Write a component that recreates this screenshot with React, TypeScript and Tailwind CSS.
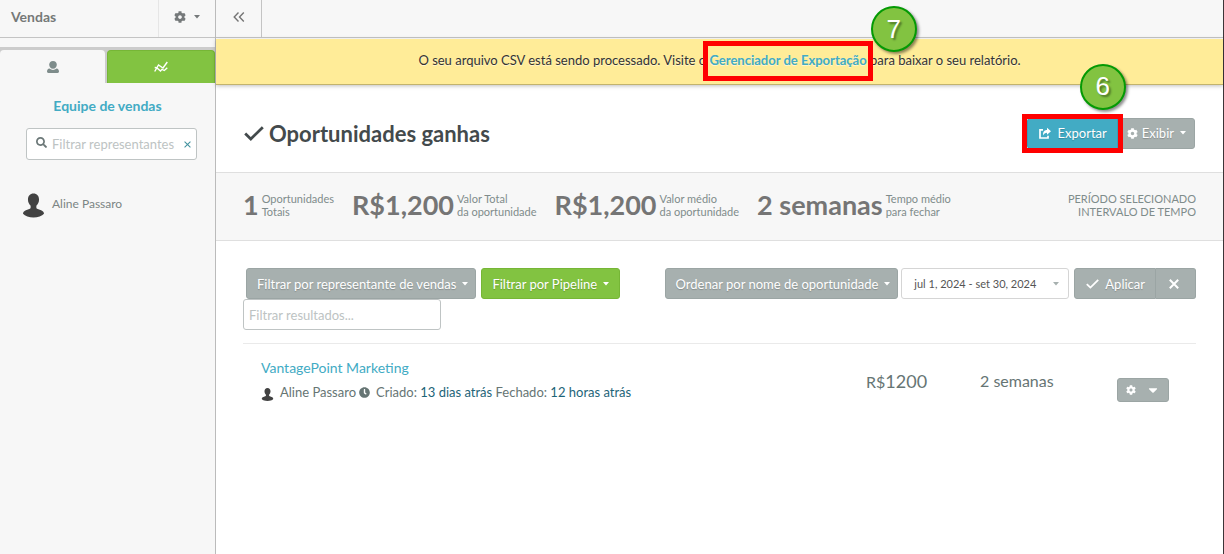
import type { ReactNode } from "react";
import { FaCog, FaSearch, FaCaretDown, FaClock } from "react-icons/fa";

const stats = [
  { value: "1", lines: ["Oportunidades", "Totais"] },
  { value: "R$1,200", lines: ["Valor Total", "da oportunidade"] },
  { value: "R$1,200", lines: ["Valor médio", "da oportunidade"] },
  { value: "2 semanas", lines: ["Tempo médio", "para fechar"] },
];

function Caret() {
  return (
    <svg className="h-1 w-1.5 shrink-0" viewBox="0 0 6 4" fill="currentColor" aria-hidden="true">
      <path d="M0 0h6L3 3.5z" />
    </svg>
  );
}

function Check({ className }: { className: string }) {
  return (
    <svg className={className} viewBox="0 0 20 15" fill="none" stroke="currentColor" strokeWidth="2.8" aria-hidden="true">
      <path d="M1.2 7.6l5.6 5.4L18.8 1.2" />
    </svg>
  );
}

function Cross({ className, strokeWidth = 2 }: { className: string; strokeWidth?: number }) {
  return (
    <svg className={className} viewBox="0 0 10 10" fill="none" stroke="currentColor" strokeWidth={strokeWidth} aria-hidden="true">
      <path d="M.8.8l8.400 8.400M9.200.8L.8 9.200" />
    </svg>
  );
}

function Avatar({ className }: { className: string }) {
  return (
    <svg className={className} viewBox="0 0 22 25" fill="#424242" aria-hidden="true">
      <path d="M11 0c3.600 0 5.800 2.600 5.800 6.200 0 2.700-1.200 5.200-2.800 6.600v1.700c0 .8.500 1.300 1.400 1.600l3.600 1.300c2 .8 3 2 3 3.800C20 23.800 15.500 25 11 25S2 23.800 0 21.200c0-1.800 1-3 3-3.800l3.600-1.300c.9-.3 1.400-.8 1.400-1.600v-1.700C6.400 11.400 5.200 8.900 5.200 6.200 5.200 2.600 7.400 0 11 0z" />
    </svg>
  );
}

function Badge({ children, className }: { children: ReactNode; className: string }) {
  return (
    <span
      className={`absolute z-10 flex size-[46px] items-center justify-center rounded-full border-2 border-[#049a04] bg-[#82c341] font-['Liberation_Sans'] text-[26px] font-normal text-white shadow-[2px_2px_3px_rgba(0,0,0,0.45)] [text-shadow:2px_2px_2px_rgba(0,0,0,0.4)] ${className}`}
    >
      {children}
    </span>
  );
}

const button =
  "flex h-[31px] items-center whitespace-nowrap rounded-[3px] border border-[#9ba5a4] bg-[#a7b0af] text-[13px] leading-5 text-white [text-shadow:0_1px_1px_rgba(0,0,0,0.2)]";

function Sidebar() {
  return (
    <aside className="w-[216px] shrink-0 border-r border-[#bbbbbb] bg-[#f7f7f7]">
      <div className="flex h-[38px] border-b border-[#c4c4c4]">
        <h2 className="flex-1 pl-[11px] text-sm leading-[34px] font-bold text-[#757978]">Vendas</h2>
        <button
          aria-label="Configurações"
          className="flex w-[57px] items-center justify-center gap-2 border-l border-[#e6e6e6] pb-1 text-[#75797a]"
        >
          <FaCog className="size-3" />
          <Caret />
        </button>
      </div>
      <div className="mt-[9px] flex h-9 gap-0.5 bg-[#cccccc] pt-[3px]">
        <button
          aria-label="Representantes"
          className="flex w-[105px] items-center justify-center rounded-t bg-[#f7f7f7] text-[#7e8c8b]"
        >
          <svg className="h-3 w-3" viewBox="0 0 12 12" fill="currentColor">
            <path d="M6 0c2.300 0 3.800 1.600 3.800 3.800S8.300 7.800 6 7.800 2.200 6 2.200 3.800 3.700 0 6 0z" />
            <path d="M2.500 7.600C3.500 8.500 4.700 9 6 9s2.500-.5 3.500-1.400c1.700.3 2.500 1.400 2.500 3 0 .9-.5 1.400-1.400 1.400H1.400C.5 12 0 11.500 0 10.600c0-1.600.8-2.700 2.500-3z" />
          </svg>
        </button>
        <button
          aria-label="Relatórios"
          className="flex flex-1 items-center justify-center rounded-t border border-b-0 border-[#76b636] bg-[#82c341] text-white"
        >
          <svg className="h-3 w-[14px]" viewBox="0 0 14 12" fill="none" stroke="currentColor" strokeWidth="1.4">
            <path d="M.7 10.500L4.500 4l4.500 3L13.300 1" />
            <path d="M.7 6.500l2 .2 3.800 3.300 1.500-1.700 2.300 1.200 3-2.800" />
          </svg>
        </button>
      </div>
      <h3 className="mt-[13px] text-center text-sm font-bold text-[#42abc4]">Equipe de vendas</h3>
      <div className="mt-3 mr-[18px] ml-[26px] flex h-8 items-center rounded-[3px] border border-[#bfc4c4] bg-white px-[9px]">
        <FaSearch className="mb-1 size-[11px] shrink-0 text-[#6c7878]" />
        <input
          aria-label="Filtrar representantes"
          placeholder="Filtrar representantes"
          className="ml-[5px] min-w-0 flex-1 text-[13px] leading-5 outline-none placeholder:text-[#bdc3c3]"
        />
        <button aria-label="Limpar" className="-mr-1 text-[#42929f]">
          <Cross className="size-[7px]" strokeWidth={1.5} />
        </button>
      </div>
      <div className="mt-[29px] flex items-center gap-2 pl-[23px] text-xs text-[#7b8584]">
        <Avatar className="mt-1 h-[25px] w-[21px]" />
        Aline Passaro
      </div>
    </aside>
  );
}

function Notice() {
  return (
    <div className="mt-px h-[46px] border-b border-[#c2b36d] bg-[#ffec98] text-center text-[13px] leading-[42px] text-[#333333] shadow-[0_1px_4px_rgba(0,0,0,0.25)] [text-shadow:0_1px_0_rgba(255,255,255,0.5)]">
      O seu arquivo CSV está sendo processado. Visite o{" "}
      <span className="relative inline-block">
        <a href="#exportar" className="font-bold text-[#42abc4]">
          Gerenciador de Exportação
        </a>
        <span className="absolute -inset-x-1.5 top-0.5 h-10 border-5 border-[#ff0000]" />
        <Badge className="-top-[33px] -right-[50px]">7</Badge>
      </span>{" "}
      para baixar o seu relatório.
    </div>
  );
}

function Stats() {
  return (
    <div className="flex h-[69px] items-center justify-between border-y border-[#dfdfdf] bg-[#f7f7f7] px-[27px] pb-1 text-[11px] leading-[13px] text-[#7f8c8b]">
      <dl className="flex gap-[18px]">
        {stats.map((stat, i) => (
          <div key={i} className="flex flex-row-reverse items-center gap-[3px]">
            <dt>
              {stat.lines[0]}
              <br />
              {stat.lines[1]}
            </dt>
            <dd className="text-[27px] leading-8 font-bold text-[#757575]">{stat.value}</dd>
          </div>
        ))}
      </dl>
      <p className="text-right">
        PERÍODO SELECIONADO
        <br />
        INTERVALO DE TEMPO
      </p>
    </div>
  );
}

function Filters() {
  return (
    <div className="flex items-start justify-between">
      <div>
        <div className="flex gap-[5px] pl-[3px]">
          <button className={`${button} gap-1.5 pr-[7px] pl-2.5`}>
            Filtrar por representante de vendas <Caret />
          </button>
          <button className="flex h-[31px] items-center gap-1.5 rounded-[3px] border border-[#76b636] bg-[#82c341] px-2.5 text-[13px] leading-5 whitespace-nowrap text-white [text-shadow:0_1px_1px_rgba(0,0,0,0.2)]">
            Filtrar por Pipeline <Caret />
          </button>
        </div>
        <input
          aria-label="Filtrar resultados"
          placeholder="Filtrar resultados..."
          className="block h-[31px] w-[198px] rounded-[3px] border border-[#bfc4c4] px-[5px] text-[13px] leading-5 outline-none placeholder:text-[#bdc3c3]"
        />
      </div>
      <div className="flex">
        <button className={`${button} gap-1.5 pr-[7px] pl-2.5`}>
          Ordenar por nome de oportunidade <Caret />
        </button>
        <button className="ml-[3px] flex h-[31px] w-[168px] items-center justify-between rounded-[3px] border border-[#d5d5d5] pr-[9px] pl-3 text-[11px] leading-5 whitespace-nowrap text-[#555555]">
          jul 1, 2024 - set 30, 2024
          <span className="text-[#a7b0af]">
            <Caret />
          </span>
        </button>
        <button className={`${button} ml-[5px] gap-1.5 rounded-r-none pr-2.5 pl-[11px]`}>
          <Check className="h-2.5 w-[13px]" /> Aplicar
        </button>
        <button aria-label="Limpar filtros" className={`${button} w-10 justify-center rounded-l-none border-l-0 pr-1`}>
          <Cross className="size-2.5" />
        </button>
      </div>
    </div>
  );
}

function Opportunity() {
  return (
    <div className="mt-[13px] flex border-t border-[#eaeaea] pt-3.5 pl-[18px] text-[#667574]">
      <div className="flex-1">
        <a href="#vantagepoint" className="block text-sm text-[#42abc4]">
          VantagePoint Marketing
        </a>
        <div className="mt-1 flex items-center text-[13px] leading-[21px]">
          <Avatar className="mt-1 mr-1.5 h-[13px] w-[13px]" />
          Aline Passaro
          <FaClock className="mr-1.5 ml-[3px] size-[11px]" />
          <span>
            Criado: <span className="text-[#1d6478]">13 dias atrás</span> Fechado:{" "}
            <span className="text-[#1d6478]">12 horas atrás</span>
          </span>
        </div>
      </div>
      <div className="mt-[9px] w-[114px] text-lg">
        <span className="text-base">R$</span>1200
      </div>
      <div className="mt-[9px] w-[137px] text-base leading-7">2 semanas</div>
      <button
        aria-label="Ações"
        className="mt-5 mr-[27px] flex h-6 w-[52px] items-center justify-center gap-2.5 rounded-[3px] border border-[#9ba5a4] bg-[#a7b0af] text-white"
      >
        <FaCog className="size-2.5" />
        <FaCaretDown className="size-[14px]" />
      </button>
    </div>
  );
}

export default function App() {
  return (
    <div className="flex min-h-screen border-r border-[#3c3538] bg-white font-['Lato',sans-serif]">
      <Sidebar />
      <main className="min-w-0 flex-1">
        <div className="h-[38px] border-b border-[#c4c4c4] bg-[#f7f7f7]">
          <button
            aria-label="Recolher menu"
            className="flex h-[37px] w-[46px] items-center justify-center border-r border-[#c4c4c4] pb-1 text-[#757575]"
          >
            <svg className="h-2.5 w-3" viewBox="0 0 12 10" fill="none" stroke="currentColor" strokeWidth="1.4">
              <path d="M5.500 .5L1.200 5l4.300 4.500M10.800 .5L6.500 5l4.300 4.500" />
            </svg>
          </button>
        </div>
        <Notice />
        <div className="flex h-[87px] items-center justify-between pt-[9px] pr-7 pl-7">
          <h1 className="flex items-center gap-[5px] text-[22px] font-bold text-[#434a4c]">
            <Check className="h-[15px] w-5" />
            Oportunidades ganhas
          </h1>
          <div className="flex">
            <div className="relative">
              <button className="flex h-[31px] items-center gap-[7px] rounded-l-[3px] border border-[#389db5] bg-[#42abc4] pr-2.5 pl-[11px] text-[13px] leading-5 text-white [text-shadow:0_1px_1px_rgba(0,0,0,0.2)]">
                <svg className="h-3 w-3" viewBox="0 0 12 12" fill="none" stroke="currentColor" strokeWidth="1.7" aria-hidden="true">
                  <path d="M4 2.800H1v8.200h8V8.800" />
                  <path d="M8 .8l4 3.500-4 3.500V5.800C6 5.800 5 6.600 4.200 8.600 3.600 5 5.200 2.900 8 2.900z" fill="currentColor" stroke="none" />
                </svg>
                Exportar
              </button>
              <span className="absolute -inset-x-[5px] -inset-y-1 border-5 border-[#ff0000]" />
              <Badge className="-top-[54px] -right-2">6</Badge>
            </div>
            <button className={`${button} gap-1 rounded-l-none pr-2 pl-2`}>
              <FaCog className="size-[11px]" />
              Exibir
              <span className="ml-0.5">
                <Caret />
              </span>
            </button>
          </div>
        </div>
        <Stats />
        <div className="px-[27px] pt-[27px]">
          <Filters />
          <Opportunity />
        </div>
      </main>
    </div>
  );
}
